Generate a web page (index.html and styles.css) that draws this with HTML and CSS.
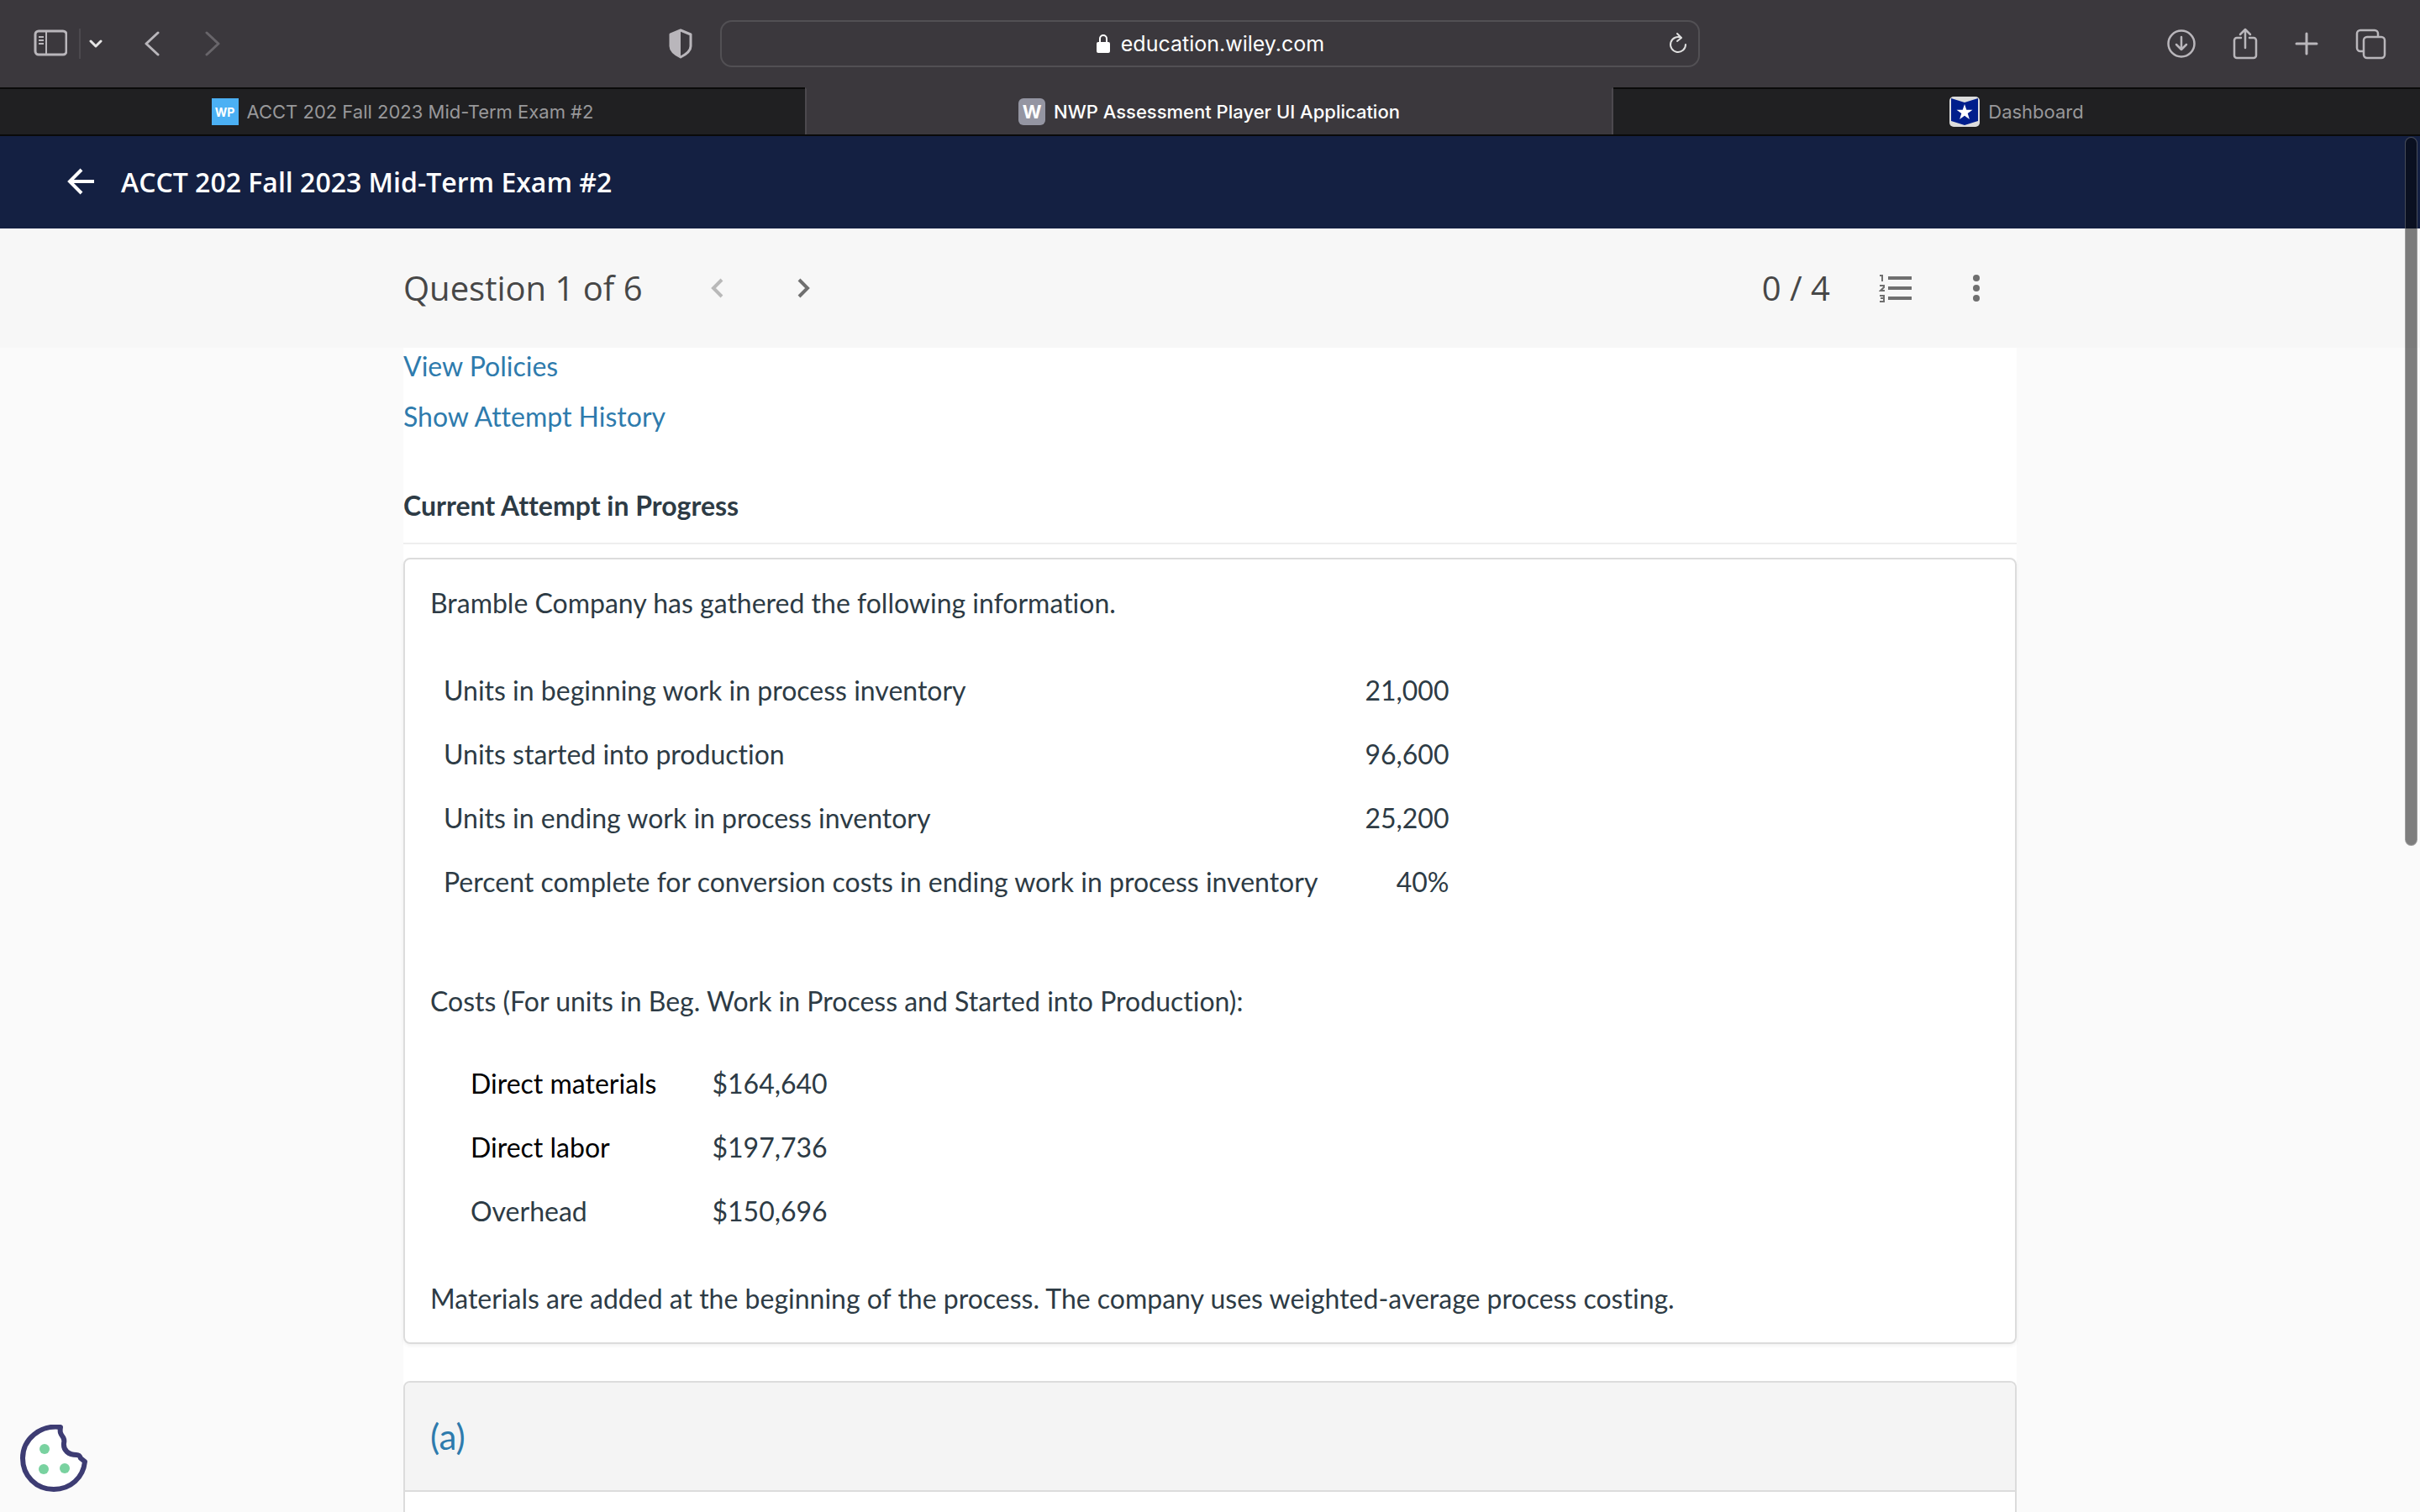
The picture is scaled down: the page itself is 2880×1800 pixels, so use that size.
FILE: index.html
```html
<!DOCTYPE html>
<html lang="en">
<head>
    <meta charset="UTF-8">
    <meta name="viewport" content="width=device-width, initial-scale=1.0">
    <title>NWP Assessment Player UI Application</title>
    <link rel="stylesheet" href="styles.css">
</head>
<body>

<div class="toolbar">
    <div class="toolbar-left">
        <button class="icon-btn" aria-label="Sidebar">
            <svg width="40" height="34" viewBox="0 0 40 34" fill="none" stroke="currentColor" stroke-width="3"><rect x="2" y="2" width="37" height="28" rx="4"/><path d="M15 2v28" stroke-width="2"/><path d="M6 9h6M6 13h6M6 17h6" stroke-width="2"/></svg>
        </button>
        <span class="divider"></span>
        <button class="icon-btn chevron" aria-label="Tab groups">
            <svg width="16" height="12" viewBox="0 0 16 12" fill="none" stroke="currentColor" stroke-width="3" stroke-linecap="round" stroke-linejoin="round"><path d="M2 3l6 6 6-6"/></svg>
        </button>
        <button class="icon-btn history" aria-label="Back">
            <svg width="18" height="30" viewBox="0 0 18 30" fill="none" stroke="currentColor" stroke-width="3" stroke-linecap="round" stroke-linejoin="round"><path d="M16 2L2 15l14 13"/></svg>
        </button>
        <button class="icon-btn history" aria-label="Forward" disabled>
            <svg width="18" height="30" viewBox="0 0 18 30" fill="none" stroke="currentColor" stroke-width="3" stroke-linecap="round" stroke-linejoin="round"><path d="M2 2l14 13L2 28"/></svg>
        </button>
        <button class="icon-btn shield" aria-label="Privacy report">
            <svg width="30" height="36" viewBox="0 0 30 36"><path d="M15 2l12 5v14c0 6-6 10-12 13C9 31 3 27 3 21V7z" fill="none" stroke="currentColor" stroke-width="3" stroke-linejoin="round"/><path d="M15 2L3 7v14c0 6 6 10 12 13z" fill="currentColor"/></svg>
        </button>
    </div>
    <div class="address-bar">
        <span class="address">
            <svg width="18" height="24" viewBox="0 0 18 24"><rect x="1" y="10" width="16" height="13" rx="2" fill="currentColor"/><path d="M5 11V6a4 4 0 0 1 8 0v5" fill="none" stroke="currentColor" stroke-width="2"/></svg>
            education.wiley.com
        </span>
        <button class="icon-btn reload" aria-label="Reload">
            <svg width="24" height="28" viewBox="0 0 24 28" fill="none" stroke="currentColor" stroke-width="2" stroke-linecap="round" stroke-linejoin="round"><path d="M16 7A9 9 0 1 0 21 15M11 2l5 5-5 4"/></svg>
        </button>
    </div>
    <div class="toolbar-right">
        <button class="icon-btn" aria-label="Downloads">
            <svg width="36" height="36" viewBox="0 0 36 36" fill="none" stroke="currentColor" stroke-width="2.5" stroke-linecap="round" stroke-linejoin="round"><circle cx="18" cy="18" r="15.5"/><path d="M18 10v15M12 19l6 6 6-6"/></svg>
        </button>
        <button class="icon-btn" aria-label="Share">
            <svg width="32" height="40" viewBox="0 0 32 40" fill="none" stroke="currentColor" stroke-width="2.5" stroke-linecap="round" stroke-linejoin="round"><path d="M11 13H6a3 3 0 0 0-3 3v18a3 3 0 0 0 3 3h20a3 3 0 0 0 3-3V16a3 3 0 0 0-3-3h-5M16 25V3M10 9l6-6 6 6"/></svg>
        </button>
        <button class="icon-btn" aria-label="New tab">
            <svg width="30" height="30" viewBox="0 0 30 30" fill="none" stroke="currentColor" stroke-width="3" stroke-linecap="round"><path d="M15 3v24M3 15h24"/></svg>
        </button>
        <button class="icon-btn" aria-label="Tab overview">
            <svg width="38" height="38" viewBox="0 0 38 38" fill="none" stroke="currentColor" stroke-width="2.5"><rect x="11" y="11" width="25" height="25" rx="4"/><path d="M11 28H7a4 4 0 0 1-4-4V7a4 4 0 0 1 4-4h17a4 4 0 0 1 4 4v4"/></svg>
        </button>
    </div>
</div>

<nav class="tabs">
    <a class="tab" href="#"><span class="favicon favicon-wp">WP</span>ACCT 202 Fall 2023 Mid-Term Exam #2</a>
    <a class="tab active" href="#"><span class="favicon favicon-w">W</span>NWP Assessment Player UI Application</a>
    <a class="tab" href="#">
        <svg width="36" height="36" viewBox="0 0 36 36"><rect width="36" height="36" rx="5" fill="#ddd"/><path d="M2 2l16 5 16-5v27l-16 5-16-5z" fill="#001e8c"/><path d="M18 9l2.300 6.800h7.200l-5.800 4.200 2.200 6.900-5.900-4.200-5.900 4.200 2.200-6.900-5.800-4.200h7.200z" fill="#fff"/></svg>
        Dashboard
    </a>
</nav>

<header class="exam-header">
    <button class="back-btn" aria-label="Go back">
        <svg width="34" height="32" viewBox="0 0 34 32" fill="none" stroke="currentColor" stroke-width="4"><path d="M32 16H4M17 2L3 16l14 14"/></svg>
    </button>
    <h1>ACCT 202 Fall 2023 Mid-Term Exam #2</h1>
</header>

<div class="question-bar">
    <div class="question-inner">
        <h2>Question 1 of 6</h2>
        <button class="nav-btn" aria-label="Previous question" disabled>
            <svg width="16" height="24" viewBox="0 0 16 24" fill="none" stroke="currentColor" stroke-width="4"><path d="M14 2L4 12l10 10"/></svg>
        </button>
        <button class="nav-btn" aria-label="Next question">
            <svg width="16" height="24" viewBox="0 0 16 24" fill="none" stroke="currentColor" stroke-width="4"><path d="M2 2l10 10L2 22"/></svg>
        </button>
        <span class="score">0 / 4</span>
        <button class="tool-btn" aria-label="Question list">
            <svg width="40" height="34" viewBox="0 0 40 34" fill="none" stroke="currentColor"><path d="M11 5h28M11 17h28M11 29h28" stroke-width="4"/><path d="M1 2h3v7M1 14h5v2l-4 4h5M1 26h5v7H1M2 29h4" stroke-width="2"/></svg>
        </button>
        <button class="tool-btn" aria-label="More options">
            <svg width="10" height="34" viewBox="0 0 10 34" fill="currentColor"><circle cx="5" cy="5" r="4"/><circle cx="5" cy="17" r="4"/><circle cx="5" cy="29" r="4"/></svg>
        </button>
    </div>
</div>

<main class="content">
    <a class="link" href="#">View Policies</a>
    <a class="link" href="#">Show Attempt History</a>
    <h3 class="attempt-title">Current Attempt in Progress</h3>

    <section class="card">
        <p>Bramble Company has gathered the following information.</p>
        <table class="units">
            <tr><td>Units in beginning work in process inventory</td><td>21,000</td></tr>
            <tr><td>Units started into production</td><td>96,600</td></tr>
            <tr><td>Units in ending work in process inventory</td><td>25,200</td></tr>
            <tr><td>Percent complete for conversion costs in ending work in process inventory</td><td>40%</td></tr>
        </table>
        <p>Costs (For units in Beg. Work in Process and Started into Production):</p>
        <table class="costs">
            <tr><td class="dark">Direct materials</td><td>$164,640</td></tr>
            <tr><td class="dark">Direct labor</td><td>$197,736</td></tr>
            <tr><td>Overhead</td><td>$150,696</td></tr>
        </table>
        <p>Materials are added at the beginning of the process. The company uses weighted-average process costing.</p>
    </section>

    <section class="part">
        <h3 class="part-title">(a)</h3>
    </section>
</main>

<button class="cookie-btn" aria-label="Cookie settings">
    <svg width="80" height="80" viewBox="0 0 80 80"><path d="M48 3C24 0 3 17 3 40c0 21 16 37 37 37 20 0 35-14 37-33l-5-4c-1-3-2-4-5-4-9 0-16-5-15-14 1-4 0-5-1-7-3-4-4-6-3-12z" fill="#fff" stroke="#3d3c73" stroke-width="6" stroke-linejoin="round"/><g fill="#79d2a0"><circle cx="29" cy="29" r="6"/><circle cx="28" cy="53" r="6"/><circle cx="53" cy="52" r="6"/></g></svg>
</button>
<div class="scrollbar"></div>

</body>
</html>
```
FILE: styles.css
```css
* {
    box-sizing: border-box;
}
body {
    margin: 0;
    height: 100vh;
    overflow: hidden;
    display: flex;
    flex-direction: column;
    font-family: Lato, sans-serif;
    font-size: 32px;
    font-variant-ligatures: none;
    color: #2d3b45;
    background: #fafafa;
}
button {
    padding: 0;
    border: none;
    background: none;
    color: inherit;
    cursor: pointer;
}
svg {
    display: block;
    flex: none;
}
a {
    text-decoration: none;
}

/* Browser toolbar */
.toolbar {
    flex: none;
    height: 104px;
    padding: 0 40px;
    display: grid;
    grid-template-columns: 1fr 1166px 1fr;
    align-items: center;
    background: #3b383d;
    color: #b9b6bb;
    font-family: Inter, sans-serif;
}
.toolbar-left, .toolbar-right {
    display: flex;
    align-items: center;
}
.toolbar-right {
    justify-content: flex-end;
    gap: 42px;
}
.divider {
    width: 2px;
    height: 36px;
    margin: 0 10px 0 14px;
    background: #4c494e;
}
.chevron {
    color: #e6e6e6;
    margin-right: 30px;
}
.history {
    margin: 0 34px 0 20px;
}
.history:disabled {
    color: #68656a;
}
.shield {
    margin: 0 32px 0 auto;
}
.address-bar {
    height: 56px;
    border: 2px solid #525054;
    border-radius: 14px;
    padding: 0 12px 0 36px;
    display: flex;
    align-items: center;
    color: #e0e0e0;
}
.address {
    flex: 1;
    display: flex;
    justify-content: center;
    align-items: center;
    gap: 12px;
    font-size: 25px;
    color: #fff;
}

/* Tabs */
.tabs {
    flex: none;
    height: 58px;
    display: grid;
    grid-template-columns: 958px 1fr 960px;
    background: #202022;
    border-bottom: 2px solid #0a0a0a;
    font-family: Inter, sans-serif;
    font-size: 22px;
}
.tab {
    display: flex;
    align-items: center;
    justify-content: center;
    gap: 10px;
    color: #98989a;
    border-top: 2px solid #0a0a0a;
}
.tab.active {
    color: #fff;
    font-weight: 500;
    background: #3b383d;
    border-top-color: #3b383d;
    border-left: 2px solid #4c494e;
    border-right: 2px solid #4c494e;
}
.favicon {
    width: 32px;
    height: 32px;
    display: flex;
    align-items: center;
    justify-content: center;
    color: #fff;
    font-weight: 700;
}
.favicon-wp {
    background: #4bb0f4;
    font-size: 14px;
}
.favicon-w {
    background: #9495a2;
    border-radius: 6px;
    font-size: 22px;
}

/* Exam header */
.exam-header {
    flex: none;
    height: 110px;
    padding: 0 80px 2px;
    display: flex;
    align-items: center;
    gap: 30px;
    background: #142042;
    color: #fff;
}
.exam-header h1 {
    margin: 0;
    font-family: "Open Sans", sans-serif;
    font-size: 32px;
    font-weight: 600;
}

.question-bar {
    flex: none;
    height: 142px;
    background: #f7f7f7;
    color: #6f6f6f;
    font-family: "Open Sans", sans-serif;
}
.question-inner {
    width: 66.6667%;
    height: 100%;
    margin: 0 auto;
    padding-right: 43px;
    display: flex;
    align-items: center;
}
.question-inner h2, .score {
    margin: 0;
    padding-bottom: 2px;
    font-size: 40px;
    font-weight: 400;
    color: #474747;
}
.question-inner h2 {
    margin-right: 80px;
}
.nav-btn {
    margin-right: 88px;
}
.nav-btn:disabled {
    color: #b9b9b9;
}
.score {
    margin-left: auto;
}
.tool-btn {
    margin-left: 58px;
}
.tool-btn + .tool-btn {
    margin-left: 71px;
}

/* Question content */
.content {
    flex: 1;
    width: 66.6667%;
    margin: 0 auto;
    display: flex;
    flex-direction: column;
    background: #fff;
    line-height: 44px;
}
.link {
    margin-bottom: 16px;
    color: #2e7bad;
}
.content h3 {
    margin: 0;
    font-size: 32px;
}
.content .attempt-title {
    margin-top: 46px;
    padding-bottom: 22px;
    border-bottom: 2px solid #eee;
}
.card {
    margin-top: 16px;
    padding: 30px;
    border: 2px solid #dcdcdc;
    border-radius: 8px;
    box-shadow: 0 2px 4px rgba(0, 0, 0, 0.06);
}
.card p {
    margin: 0;
}
table {
    border-collapse: collapse;
}
td {
    padding: 16px;
}
.units {
    margin: 44px 0 82px;
}
.units td:last-child {
    padding-left: 40px;
    text-align: right;
}
.costs {
    margin: 38px 0 44px 32px;
}
.costs td:last-child {
    padding-left: 50px;
}
.dark {
    color: #000;
}
.part {
    flex: 1;
    margin-top: 44px;
    border: 2px solid #dcdcdc;
    border-bottom: none;
    border-radius: 8px 8px 0 0;
}
.content .part-title {
    padding: 42px 30px;
    font-size: 42px;
    font-weight: 400;
    color: #2e7bad;
    background: #f4f4f4;
    border-bottom: 2px solid #dcdcdc;
    border-radius: 6px 6px 0 0;
}

.cookie-btn {
    position: fixed;
    left: 24px;
    bottom: 24px;
}
.scrollbar {
    position: fixed;
    top: 163px;
    right: 3px;
    width: 15px;
    height: 844px;
    border-radius: 8px;
    border: 1px solid rgba(255, 255, 255, 0.25);
    background: rgba(0, 0, 0, 0.5);
}
```
